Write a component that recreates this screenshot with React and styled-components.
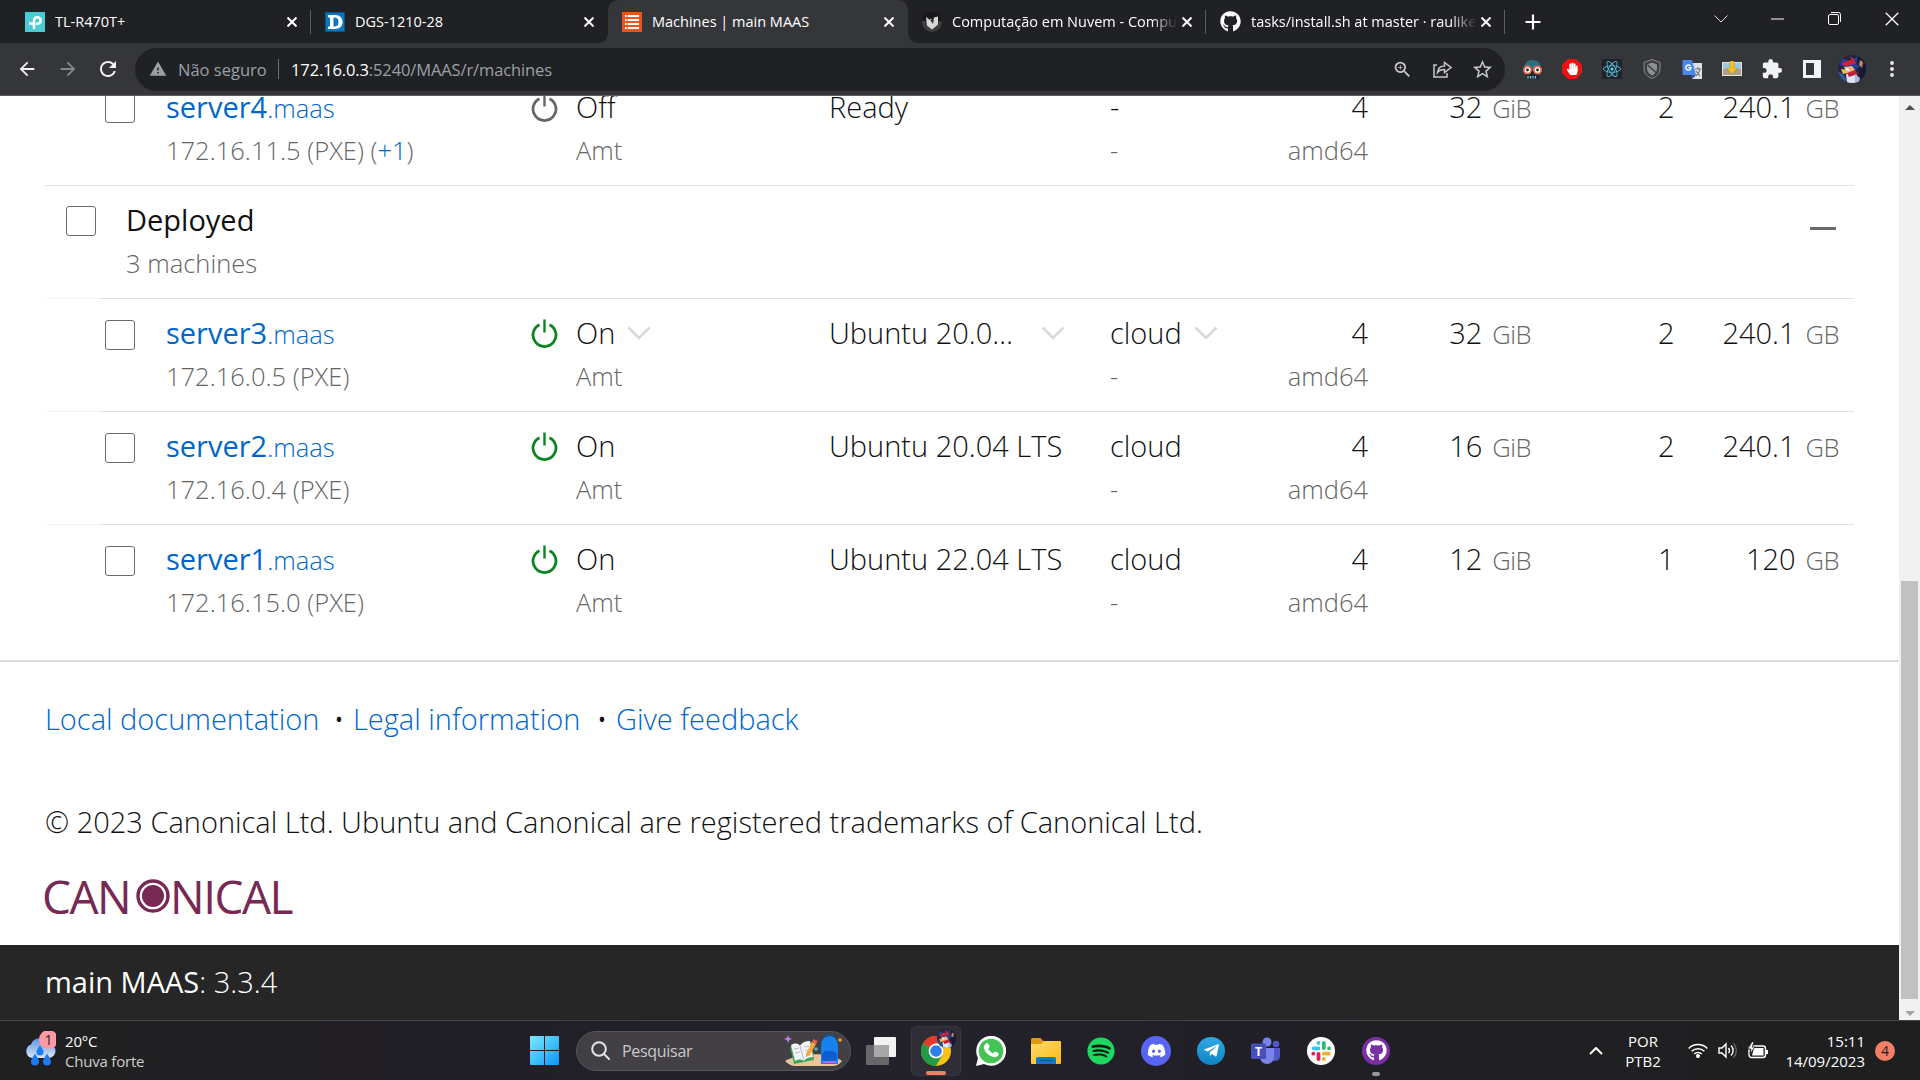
import React from "react";
import styled, { createGlobalStyle } from "styled-components";
import { FaGithub, FaSpotify, FaDiscord, FaTelegramPlane, FaWhatsapp, FaReact, FaHandPaper } from "react-icons/fa";
import { MdArrowBack, MdArrowForward, MdRefresh, MdWarning, MdZoomIn, MdStarBorder, MdExtension } from "react-icons/md";

const Global = createGlobalStyle`
  * { box-sizing: border-box; }
  body { margin: 0; background: #fff; overflow: hidden; }
`;

const Screen = styled.div`
  width: 1920px;
  height: 1080px;
  display: flex;
  flex-direction: column;
  overflow: hidden;
  font-family: "Open Sans", "Noto Sans", sans-serif;
`;

/* ---------- browser ---------- */
const TabStrip = styled.div`
  height: 43px;
  flex: none;
  display: flex;
  background: #202124;
  padding-left: 11px;
`;
const Tab = styled.div`
  position: relative;
  width: ${(p) => p.$w}px;
  height: 43px;
  display: flex;
  align-items: center;
  padding: 0 14px;
  gap: 10px;
  color: #fff;
  background: ${(p) => (p.$active ? "#35363a" : "transparent")};
  border-radius: 10px 10px 0 0;
  &::after {
    content: "";
    display: ${(p) => (p.$sep ? "block" : "none")};
    position: absolute;
    right: 0;
    top: 10px;
    width: 1px;
    height: 24px;
    background: #5b5d61;
  }
`;
const Corner = styled.i`
  position: absolute;
  bottom: 0;
  width: 9px;
  height: 9px;
  ${(p) => (p.$left ? "left: -9px;" : "right: -9px;")}
  background: radial-gradient(circle at ${(p) => (p.$left ? "0 0" : "100% 0")}, transparent 8.5px, #35363a 9px);
`;
const TabTitle = styled.span`
  flex: 1;
  min-width: 0;
  overflow: hidden;
  white-space: nowrap;
  font-size: 14.5px;
  line-height: 20px;
  letter-spacing: ${(p) => p.$ls || 0}px;
  margin-right: -6px;
  mask-image: ${(p) => (p.$fade ? "linear-gradient(90deg, #000 88%, transparent 100%)" : "none")};
`;
const WindowButtons = styled.div`
  margin-left: auto;
  display: flex;
  align-items: center;
  height: 37px;
  padding-right: 0;
`;
const WinBtn = styled.div`
  width: 57px;
  display: flex;
  justify-content: center;
`;
const NewTab = styled.div`
  width: 55px;
  display: flex;
  align-items: center;
  justify-content: center;
`;
const Toolbar = styled.div`
  height: 53px;
  flex: none;
  display: flex;
  align-items: center;
  background: #35363a;
  border-bottom: 1px solid #5c5b60;
  padding: 0 8px 0 7px;
`;
const NavBtn = styled.div`
  width: 40.5px;
  display: flex;
  justify-content: center;
  color: ${(p) => (p.$dim ? "#86888b" : "#f1f1f1")};
`;
const Omnibox = styled.div`
  width: 1370px;
  height: 43px;
  margin-left: 6.5px;
  margin-right: 7px;
  border-radius: 22px;
  background: #202124;
  display: flex;
  align-items: center;
  padding: 0 12px 0 14px;
  font-size: 16.5px;
  color: #9aa0a6;
`;
const Insecure = styled.span`
  margin-left: 11px;
  width: 100px;
  letter-spacing: ${(p) => p.$ls || 0}px;
`;
const Bar = styled.i`
  width: 1px;
  height: 20px;
  background: #6d7074;
  margin-right: 12px;
`;
const Url = styled.span`
  flex: 1;
  letter-spacing: -0.12px;
  b { font-weight: 400; color: #fff; }
`;
const OmniIcon = styled.div`
  width: 40px;
  margin-right: ${(p) => (p.$last ? -9 : 0)}px;
  display: flex;
  justify-content: center;
  color: #c6c8ca;
`;
const Ext = styled.div`
  width: 40px;
  display: flex;
  justify-content: center;
`;

/* ---------- page ---------- */
const Viewport = styled.div`
  height: 924px;
  flex: none;
  display: flex;
  overflow: hidden;
`;
const Page = styled.div`
  width: 1899px;
  display: flex;
  flex-direction: column;
  background: #fff;
  color: #111;
  font-weight: 300;
  font-size: 29px;
`;
const Table = styled.div`
  margin: -24px 45px 23px;
  width: 1809px;
`;
const grid = "121px 365px 298px 281px 140px 118px 163px 143.5px 164.5px";
const Row = styled.div`
  display: grid;
  grid-template-columns: ${grid};
  height: 113px;
  padding-top: 14px;
  background:
    linear-gradient(${(p) => (p.$nested ? "#f5f5f5" : "#e1e1e1")}, ${(p) => (p.$nested ? "#f5f5f5" : "#e1e1e1")}) 0 0 / 54px 1px no-repeat,
    linear-gradient(#e1e1e1, #e1e1e1) 54px 0 / 1755px 1px no-repeat;
`;
const GroupRow = styled(Row)`
  grid-template-columns: 81px 1fr auto;
`;
const Cell = styled.div`
  display: flex;
  flex-direction: column;
  align-items: ${(p) => (p.$right ? "flex-end" : "flex-start")};
  padding-left: ${(p) => p.$pad || 0}px;
  white-space: nowrap;
`;
const Primary = styled.div`
  height: 42px;
  line-height: 42px;
  display: flex;
  align-items: baseline;
  font-weight: ${(p) => (p.$strong ? 400 : 300)};
  letter-spacing: ${(p) => p.$ls || 0}px;
  color: ${(p) => (p.$link ? "#06c" : "#111")};
`;
const Secondary = styled.div`
  height: 42px;
  line-height: 42px;
  margin-top: 1px;
  font-size: 25.5px;
  letter-spacing: ${(p) => p.$ls || 0}px;
  color: #666;
`;
const Domain = styled.span`
  font-size: 25.5px;
  font-weight: 300;
`;
const Unit = styled.span`
  font-size: 25.5px;
  color: #666;
  margin-left: 10px;
  letter-spacing: -0.5px;
`;
const More = styled.span`
  color: #06c;
`;
const Checkbox = styled.div`
  width: 30px;
  height: 30px;
  border: 1.5px solid #6b6b6b;
  border-radius: 3px;
  margin-top: ${(p) => p.$top}px;
  margin-left: ${(p) => p.$left}px;
`;
const PowerCell = styled.div`
  display: flex;
  gap: 18px;
`;
const Caret = styled.svg`
  align-self: center;
  margin-left: ${(p) => p.$gap}px;
  margin-top: -1px;
`;
const Collapse = styled.div`
  width: 26px;
  height: 3px;
  background: #6a6a6a;
  margin: 28px 18px 0 0;
`;
const Footer = styled.footer`
  flex: 1;
  display: flex;
  flex-direction: column;
  border-top: 2px solid #d9d9d9;
  padding: 35px 45px 0;
`;
const Links = styled.div`
  display: flex;
  height: 44px;
  line-height: 44px;
  white-space: pre;
`;
const Link = styled.span`
  color: #06c;
  width: ${(p) => p.$w}px;
  letter-spacing: ${(p) => p.$ls || 0}px;
`;
const Dot = styled.span`
  width: 28px;
  text-align: center;
`;
const Legal = styled.div`
  margin-top: 59px;
  height: 44px;
  line-height: 44px;
  white-space: nowrap;
  letter-spacing: ${(p) => p.$ls || 0}px;
`;
const Logo = styled.div`
  display: flex;
  align-items: center;
  height: 46px;
  margin-top: 29px;
  margin-left: -3px;
  font-size: 46px;
  line-height: 46px;
  font-weight: 400;
  color: #772953;
`;
const LogoPart = styled.span`
  width: ${(p) => p.$w}px;
  letter-spacing: ${(p) => p.$ls}px;
  white-space: nowrap;
`;
const Status = styled.div`
  height: 75px;
  flex: none;
  background: #262626;
  color: #fff;
  padding: 16px 45px 0;
  line-height: 42px;
  b { font-weight: 400; }
`;
const Scrollbar = styled.div`
  width: 21px;
  background: #f1f1f1;
  display: flex;
  flex-direction: column;
  align-items: center;
  justify-content: space-between;
`;
const Thumb = styled.div`
  width: 17px;
  height: 418px;
  background: #c1c1c1;
`;
const ScrollUp = styled.div`
  height: 485px;
  padding-top: 4px;
`;
const ScrollDown = styled.div`
  height: 21px;
  padding-top: 2px;
`;

/* ---------- taskbar ---------- */
const Taskbar = styled.div`
  height: 60px;
  flex: none;
  display: flex;
  align-items: center;
  background: linear-gradient(90deg, #202020, #221f27 25%, #23212b 50%, #201f24 72%, #1f1f1f);
  border-top: 1px solid #444446;
  color: #fff;
  font-size: 15px;
`;
const Weather = styled.div`
  width: 517px;
  padding-left: 24px;
  display: flex;
  gap: 9px;
`;
const Lines = styled.div`
  display: flex;
  flex-direction: column;
  text-align: ${(p) => p.$align || "left"};
  line-height: 20px;
  letter-spacing: ${(p) => p.$ls || 0}px;
  white-space: nowrap;
  width: ${(p) => (p.$w ? p.$w + "px" : "auto")};
  margin-right: ${(p) => p.$mr || 0}px;
`;
const Dim = styled.span`
  color: #cfcfcf;
`;
const Start = styled.div`
  width: 59px;
  padding-left: 13px;
  display: flex;
`;
const Search = styled.div`
  width: 275px;
  height: 40px;
  border-radius: 20px;
  background: #423f45;
  border: 1px solid #58565b;
  display: flex;
  align-items: center;
  padding: 0 6px 0 14px;
  color: #c9c8ca;
  font-size: 16px;
  margin-right: 2.5px;
`;
const SearchLabel = styled.span`
  flex: 1;
  padding-left: 12px;
  letter-spacing: -0.3px;
`;
const App55 = styled.div`
  position: relative;
  width: 55px;
  height: 50px;
  display: flex;
  align-items: center;
  justify-content: center;
`;
const Running = styled(App55)`
  width: 50px;
  margin: 0 2.5px;
  border-radius: 5px;
  background: #2f2d36;
  border: 1px solid #37353d;
`;
const Indicator = styled.i`
  position: absolute;
  bottom: 0;
  width: ${(p) => p.$w}px;
  height: 4px;
  border-radius: 2px;
  background: ${(p) => p.$c};
`;
const Disc = styled.div`
  width: ${(p) => p.$s}px;
  height: ${(p) => p.$s}px;
  border-radius: 50%;
  background: ${(p) => p.$bg};
  color: ${(p) => p.$fg || "#fff"};
  display: flex;
  align-items: center;
  justify-content: center;
`;
const Mini = styled.div`
  position: absolute;
  right: 4px;
  top: 2px;
  display: flex;
`;
const Tray = styled.div`
  margin-left: auto;
  display: flex;
  align-items: center;
  padding-right: 25px;
`;
const TrayIcon = styled.div`
  width: 30px;
  display: flex;
  justify-content: center;
`;
const Badge = styled(Disc)`
  font-size: 14px;
  color: #1c1c1c;
  margin-left: 10px;
`;

const Cross = ({ s = 10, w = 2, c = "#fff" }) => (
  <svg width={s} height={s} viewBox="0 0 10 10" stroke={c} strokeWidth={w} fill="none">
    <path d="M.5.5l9 9M9.5.5l-9 9" />
  </svg>
);

const Avatar = ({ s }) => (
  <svg width={s} height={s} viewBox="0 0 28 28">
    <defs>
      <clipPath id={"av" + s}><circle cx="14" cy="14" r="14" /></clipPath>
    </defs>
    <g clipPath={`url(#av${s})`}>
      <rect width="28" height="28" fill="#22243f" />
      <path d="M20 0h8v28h-6z" fill="#171a30" />
      <path d="M22 5l3 2-1 6-3-3z" fill="#c9885b" />
      <path d="M3 3l9 3 8-5-2 8 5 2-6 4-10-2-5-3z" fill="#263d91" />
      <path d="M4 8l8-3 7 3-7 2-6 1z" fill="#cf2138" />
      <path d="M12 1l5 4-2 4z" fill="#d4293b" />
      <path d="M6 12l8-1 3 4-3 4-6-1z" fill="#f0b184" />
      <path d="M8 13l3 1v2l-3-1z" fill="#fff" />
      <path d="M3 14l5 1 1 3-4 1z" fill="#f5c543" />
      <path d="M8 19l9-3 5 12H9z" fill="#dfe6f3" />
      <path d="M9 18l8-3 3 4-9 3z" fill="#c91f34" />
      <path d="M17 19l5 4-1 5h-4z" fill="#a7b5d8" />
      <path d="M0 16l6 4 4 8H0z" fill="#315b91" />
    </g>
  </svg>
);

const MaasIcon = () => (
  <svg width="20" height="20" viewBox="0 0 20 20">
    <path d="M0 0h20v20H0z" fill="#e95420" />
    {[3, 7, 11, 15].map((y) => (
      <path key={y} d={`M3 ${y}h1.6v2H3zM5.6 ${y}h11.4v2H5.6z`} fill="#fff" />
    ))}
  </svg>
);
const TpIcon = () => (
  <svg width="20" height="20" viewBox="0 0 20 20">
    <path d="M0 0h20v20H0z" fill="#4acbd6" />
    <path d="M4 11.5h5M9 17v-8.500a3.300 3.300 0 1 1 3.300 3.300H11" stroke="#fff" strokeWidth="2.600" fill="none" />
  </svg>
);
const DlinkIcon = () => (
  <svg width="20" height="20" viewBox="0 0 20 20">
    <path d="M0 0h20v20H0z" fill="#0b5288" />
    <path d="M1 1h18v18H1z" fill="#0a76bd" />
    <path d="M3 3h7c5 0 7.500 3 7.500 7s-2.500 7-7.500 7H3v-2l2-1V6L3 5zM8.500 5.500v9c4 0 5-1.500 5-4.500s-1-4.500-5-4.500z" fill="#fff" fillRule="evenodd" />
  </svg>
);
const NuvemIcon = () => (
  <svg width="20" height="20" viewBox="0 0 20 20">
    <circle cx="10" cy="10" r="10" fill="#3e3e3e" />
    <path d="M0 9a10 10 0 0 1 20 0z" fill="#181818" />
    <path d="M4 5l4 3v-1.500l3 2 1-3 4-1v8l-6 5-5-4z" fill="#d9d9d9" />
    <path d="M8 8l3 4 1-5z" fill="#3e3e3e" />
  </svg>
);

const Power = ({ on }) => (
  <svg width="27" height="30" viewBox="0 0 27 30" fill="none" stroke={on ? "#0e8420" : "#666"} strokeWidth="2.800">
    <path d="M8.500 6.200A11.500 11.500 0 1 0 18.500 6.200" />
    <path d="M13.500 1v13" strokeWidth="2.400" />
  </svg>
);
const Chevron = ({ gap }) => (
  <Caret $gap={gap} width="24" height="14" viewBox="0 0 24 14" fill="none" stroke="#d9d9d9" strokeWidth="2.600">
    <path d="M1.500 1.500L12 12 22.500 1.500" />
  </Caret>
);

function Machine({ m }) {
  return (
    <Row $nested={m.nested}>
      <Checkbox $left={60} $top={m.nested ? 8 : 7} />
      <Cell>
        <Primary $strong $link $ls={0}>{m.name}<Domain>.maas</Domain></Primary>
        <Secondary>{m.ip} (PXE){m.more && <> (<More>{m.more}</More>)</>}</Secondary>
      </Cell>
      <PowerCell>
        <svg width="27" height="37" viewBox="0 -6.500 27 37" overflow="visible"><Power on={m.on} /></svg>
        <Cell>
          <Primary>{m.on ? "On" : "Off"}{m.open && <Chevron gap={12} />}</Primary>
          <Secondary>Amt</Secondary>
        </Cell>
      </PowerCell>
      <Cell>
        <Primary>{m.status}{m.open && <Chevron gap={28} />}</Primary>
      </Cell>
      <Cell>
        <Primary>{m.pool}{m.open && <Chevron gap={12} />}</Primary>
        <Secondary>-</Secondary>
      </Cell>
      <Cell $right>
        <Primary>4</Primary>
        <Secondary>amd64</Secondary>
      </Cell>
      <Cell $right><Primary>{m.ram}<Unit>GiB</Unit></Primary></Cell>
      <Cell $right><Primary>{m.disks}</Primary></Cell>
      <Cell $right><Primary>{m.storage}<Unit>GB</Unit></Primary></Cell>
    </Row>
  );
}

const ready = { name: "server4", ip: "172.16.11.5", more: "+1", on: false, status: "Ready", pool: "-", ram: 32, disks: 2, storage: "240.1" };
const deployed = [
  { name: "server3", ip: "172.16.0.5", on: true, open: true, status: "Ubuntu 20.0…", pool: "cloud", ram: 32, disks: 2, storage: "240.1", nested: true },
  { name: "server2", ip: "172.16.0.4", on: true, status: "Ubuntu 20.04 LTS", pool: "cloud", ram: 16, disks: 2, storage: "240.1", nested: true },
  { name: "server1", ip: "172.16.15.0", on: true, status: "Ubuntu 22.04 LTS", pool: "cloud", ram: 12, disks: 1, storage: "120", nested: true },
];

const tabs = [
  { icon: <TpIcon />, title: "TL-R470T+", w: 300, sep: true },
  { icon: <DlinkIcon />, title: "DGS-1210-28", w: 297 },
  { icon: <MaasIcon />, title: "Machines | main MAAS", w: 300, active: true },
  { icon: <NuvemIcon />, title: "Computação em Nuvem - Computação", w: 298, sep: true, fade: true },
  { icon: <FaGithub size={21} />, title: "tasks/install.sh at master · raulikeda", w: 299, sep: true, fade: true },
];

function Browser() {
  return (
    <>
      <TabStrip>
        {tabs.map((t) => (
          <Tab key={t.title} $w={t.w} $active={t.active} $sep={t.sep}>
            {t.active && <><Corner $left /><Corner /></>}
            {t.icon}
            <TabTitle $fade={t.fade}>{t.title}</TabTitle>
            <Cross />
          </Tab>
        ))}
        <NewTab>
          <svg width="16" height="16" viewBox="0 0 16 16" stroke="#fff" strokeWidth="2.200"><path d="M8 0.500v15M.5 8h15" /></svg>
        </NewTab>
        <WindowButtons>
          <WinBtn><svg width="14" height="8" viewBox="0 0 14 8" fill="none" stroke="#ddd"><path d="M.5.5L7 7 13.500.5" /></svg></WinBtn>
          <WinBtn><svg width="13" height="2"><path d="M0 1h13" stroke="#fff" /></svg></WinBtn>
          <WinBtn>
            <svg width="13" height="13" viewBox="0 0 13 13" fill="none" stroke="#fff">
              <rect x=".5" y="2.500" width="10" height="10" rx="1.500" />
              <path d="M3 .5h7.500a2 2 0 0 1 2 2V10" />
            </svg>
          </WinBtn>
          <WinBtn><Cross s={14} w={0.9} /></WinBtn>
        </WindowButtons>
      </TabStrip>
      <Toolbar>
        <NavBtn><MdArrowBack size={22} /></NavBtn>
        <NavBtn $dim><MdArrowForward size={22} /></NavBtn>
        <NavBtn><MdRefresh size={24} /></NavBtn>
        <Omnibox>
          <MdWarning size={18} />
          <Insecure>Não seguro</Insecure>
          <Bar />
          <Url><b>172.16.0.3</b>:5240/MAAS/r/machines</Url>
          <OmniIcon><MdZoomIn size={21} /></OmniIcon>
          <OmniIcon>
            <svg width="19" height="18" viewBox="0 0 19 18" fill="none" stroke="#c6c8ca" strokeWidth="1.500">
              <path d="M4 5H1v12h13v-4M4.500 12.500c.5-4.500 3-6.500 7-6.500V2.500L18 7.500l-6.500 5V9.500c-3.500 0-5.500 1-7 3z" />
            </svg>
          </OmniIcon>
          <OmniIcon $last><MdStarBorder size={23} /></OmniIcon>
        </Omnibox>
        <Ext>
          <svg width="21" height="21" viewBox="0 0 21 21">
            <path d="M2 11C2 4 5 1 10.500 1S19 4 19 11z" fill="#2c6f80" />
            <path d="M4 12h13v6a2 2 0 0 1-2 2H6a2 2 0 0 1-2-2z" fill="#15262c" />
            <path d="M6 17v2.500M8.500 17v2.500M11 17v2.500M13.500 17v2.500" stroke="#8fd0e4" strokeWidth="1.200" />
            <circle cx="5.500" cy="11" r="3.600" fill="#fff" stroke="#ef6f53" strokeWidth="1.700" />
            <circle cx="15.500" cy="11" r="3.600" fill="#fff" stroke="#ef6f53" strokeWidth="1.700" />
            <circle cx="5.500" cy="11" r="1.400" fill="#222" /><circle cx="15.500" cy="11" r="1.400" fill="#222" />
          </svg>
        </Ext>
        <Ext>
          <svg width="20" height="20" viewBox="0 0 20 20">
            <path d="M6 0h8l6 6v8l-6 6H6l-6-6V6z" fill="#ee1111" />
            <FaHandPaper x="4" y="3.500" size={12.500} color="#fff" />
          </svg>
        </Ext>
        <Ext>
          <svg width="20" height="20" viewBox="0 0 20 20">
            <rect width="20" height="20" rx="1" fill="#20232a" />
            <FaReact x="1" y="1" size={18} color="#5ecbe8" />
          </svg>
        </Ext>
        <Ext>
          <svg width="18" height="20" viewBox="0 0 18 20">
            <path d="M9 .5l8 3v6c0 5-3 8-8 10-5-2-8-5-8-10v-6z" fill="#3c3d40" stroke="#8c8e90" />
            <path d="M9 3.500l5 2V9.500c0 3.500-2 5.500-5 7-3-1.500-5-3.500-5-7v-4z" fill="#8d8f91" />
            <path d="M4.500 6l9 8" stroke="#3c3d40" strokeWidth="1.500" />
          </svg>
        </Ext>
        <Ext>
          <svg width="21" height="21" viewBox="0 0 21 21">
            <path d="M9 4h11v16H10z" fill="#dfe1e3" />
            <path d="M13 10h6M16 8v2M14 17c2-2 3.500-4 4-7M14 12l4 5" stroke="#6d7a85" strokeWidth="1.200" fill="none" />
            <path d="M1.500 1H10l4 15H1.500A1 1 0 0 1 .5 15V2a1 1 0 0 1 1-1z" fill="#4a87ee" />
            <path d="M14 16l-3.500 4-1-4z" fill="#2c55b8" />
            <path d="M8.500 7A2.600 2.600 0 1 0 9 8.800H6.500" stroke="#fff" strokeWidth="1.400" fill="none" />
          </svg>
        </Ext>
        <Ext>
          <svg width="20" height="16" viewBox="0 0 20 16">
            <path d="M0 1h20v14H0z" fill="#e8e4d8" />
            <path d="M1 2h18v6H1z" fill="#9cc7e6" /><path d="M1 8h18v6H1z" fill="#a89f90" />
            <path d="M8 0h4v7h3.500L10 13 4.500 7H8z" fill="#f6c423" stroke="#b98612" strokeWidth=".5" />
          </svg>
        </Ext>
        <Ext><MdExtension size={22} color="#f1f3f4" /></Ext>
        <Ext>
          <svg width="18" height="18" viewBox="0 0 18 18"><path d="M0 0h18v18H0zM3 3v12h8V3z" fill="#f1f3f4" fillRule="evenodd" /></svg>
        </Ext>
        <Ext><Avatar s={28} /></Ext>
        <Ext>
          <svg width="4" height="18" fill="#e8eaed"><circle cx="2" cy="3" r="1.900" /><circle cx="2" cy="9" r="1.900" /><circle cx="2" cy="15" r="1.900" /></svg>
        </Ext>
      </Toolbar>
    </>
  );
}

function Desktop() {
  return (
    <Taskbar>
      <Weather>
        <svg width="32" height="40" viewBox="0 0 32 40">
          <defs>
            <linearGradient id="cl" x1="0" y1="0" x2="0" y2="1"><stop offset="0" stopColor="#5c93e0" /><stop offset="1" stopColor="#dbe6fa" /></linearGradient>
          </defs>
          <path d="M8 27a7 7 0 0 1-1-13.500A9 9 0 0 1 24 13a7 7 0 0 1 1 14z" fill="url(#cl)" />
          <path d="M16 15c3 4 3.500 5 3.500 6.500a3.500 3.500 0 0 1-7 0C12.500 20 13 19 16 15zM11 23c3 5 4 6 4 8a4 4 0 0 1-8 0c0-2 1-3 4-8zM23 23c3 5 4 6 4 8a4 4 0 0 1-8 0c0-2 1-3 4-8z" transform="translate(0 -.5)" fill="#1b7cf2" />
          <circle cx="24.500" cy="8.500" r="9.500" fill="#ff99a4" />
          <text x="24.500" y="13.500" textAnchor="middle" fontSize="14" fill="#222">1</text>
        </svg>
        <Lines $ls={-0.2}><span>20°C</span><Dim>Chuva forte</Dim></Lines>
      </Weather>
      <Start>
        <svg width="29" height="29" viewBox="0 0 29 29">
          <defs><linearGradient id="win" x1="0" y1="0" x2="1" y2="1"><stop offset="0" stopColor="#7deaff" /><stop offset="1" stopColor="#0a96fb" /></linearGradient></defs>
          <path d="M1 0h13v14H0V1a1 1 0 0 1 1-1zM15 0h13a1 1 0 0 1 1 1v13H15zM0 15h14v14H1a1 1 0 0 1-1-1zM15 15h14v13a1 1 0 0 1-1 1H15z" fill="url(#win)" />
        </svg>
      </Start>
      <Search>
        <svg width="19" height="19" viewBox="0 0 19 19" fill="none" stroke="#e4e4e4" strokeWidth="2"><circle cx="8" cy="8" r="6.800" /><path d="M13 13l5 5" strokeLinecap="round" /></svg>
        <SearchLabel>Pesquisar</SearchLabel>
        <svg width="60" height="34" viewBox="0 0 60 34">
          <path d="M1 27C14 19 46 17 58 27c-3 4-6 5-10 5H12C8 32 5 31 1 27z" fill="#eac69a" />
          <path d="M6 13l22-5 2 18-20 4z" fill="#3fa55e" />
          <path d="M7 11c4-2 7-2 9 1 2-4 6-5 10-5l3 16c-4 0-7 1-9 4-2-2-6-2-9 0z" fill="#f4f4f8" />
          <path d="M16 12l4 14M10 15l5-1M11 19l5-1M20 13l5-1M21 17l5-1" stroke="#b9bac9" fill="none" />
          <path d="M22 20l6-12 4 2-6 11-4 2z" fill="#f7a43c" /><path d="M28 8l1.500-3 4 2-1.500 3z" fill="#e8604c" />
          <path d="M3 1l1.200 2.800L7 5 4.200 6 3 9 2 6-1 5l3-1.200z" fill="#c77df0" transform="translate(1 0)" />
          <path d="M37 30V13c0-7 3-11 8.500-11S54 6 54 13v17z" fill="#1781ec" />
          <path d="M42 3c0-4 7-4 7 0" stroke="#0b58b3" fill="none" strokeWidth="1.500" />
          <rect x="38" y="17" width="15" height="12" rx="5" fill="#0b5dd0" /><path d="M39 27h13v2H39z" fill="#b06df0" />
          <circle cx="56" cy="6" r="1.800" fill="#f5a31b" /><circle cx="32" cy="15" r="1.700" fill="#3fc0d8" />
        </svg>
      </Search>
      <App55>
        <svg width="30" height="28" viewBox="0 0 30 28">
          <rect x="0" y="8" width="23" height="20" rx="1" fill="#68686a" />
          <rect x="8" y="0" width="22" height="20" rx="1" fill="#f3f3f3" />
          <path d="M8 8h15v12H8z" fill="#a8a8a8" />
        </svg>
      </App55>
      <Running>
        <svg width="30" height="30" viewBox="0 0 30 30">
          <circle cx="15" cy="15" r="15" fill="#fbc116" />
          <path d="M15 15L2 7.500A15 15 0 0 1 28 7.500H15z" fill="#e33b2e" />
          <path d="M2 7.500A15 15 0 0 0 15 30l6.500-11.300L15 15z" fill="#229a48" />
          <circle cx="15" cy="15" r="7.400" fill="#fff" /><circle cx="15" cy="15" r="5.800" fill="#2f7de9" />
        </svg>
        <Mini><Avatar s={19} /></Mini>
        <Indicator $w={20} $c="#f47f67" />
      </Running>
      <App55>
        <svg width="30" height="30" viewBox="0 0 30 30">
          <path d="M0 30l2-8A15 15 0 1 1 8 28z" fill="#fff" />
          <circle cx="15" cy="15" r="12.300" fill="#45c455" />
          <path d="M10 7.500c1-1 2-.5 2.500.6l1 2.200c.3.800-1 1.800-1.300 2.400 1 2.200 2.700 3.600 5 4.600.8-.4 1.500-2 2.300-1.700l2.500 1.200c1 .5.800 1.400.3 2.500-.8 1.700-3 2.300-5 1.700C12 19.500 9 16 8 12.500c-.5-2 .5-4 2-5z" fill="#fff" />
        </svg>
      </App55>
      <App55>
        <svg width="30" height="26" viewBox="0 0 30 26">
          <defs><linearGradient id="fo" x1="0" y1="0" x2="1" y2="1"><stop offset="0" stopColor="#ffdc6b" /><stop offset="1" stopColor="#fbb915" /></linearGradient></defs>
          <path d="M0 1.500A1.500 1.500 0 0 1 1.500 0h8l3 3H29v5H0z" fill="#dc9b0b" />
          <path d="M0 6h10l3-3h16a1 1 0 0 1 1 1v21a1 1 0 0 1-1 1H1a1 1 0 0 1-1-1z" fill="url(#fo)" />
          <path d="M5 26v-5a2 2 0 0 1 2-2h16a2 2 0 0 1 2 2v5z" fill="#1177cd" /><path d="M9 22.500h12" stroke="#0a4e8c" />
        </svg>
      </App55>
      <App55><Disc $s={24} $bg="#101a13" $fg="#1ed760"><FaSpotify size={28} style={{ flex: "none" }} /></Disc></App55>
      <App55><Disc $s={30} $bg="#5865f2"><FaDiscord size={19} /></Disc></App55>
      <App55><Disc $s={28} $bg="linear-gradient(#2fa9e3, #0f84c4)"><FaTelegramPlane size={17} /></Disc></App55>
      <App55>
        <svg width="30" height="28" viewBox="0 0 30 28">
          <circle cx="25" cy="7" r="3.300" fill="#5059c9" /><path d="M20 11h9v8a5 5 0 0 1-9 3z" fill="#5059c9" />
          <circle cx="16" cy="5" r="4.500" fill="#7b83eb" /><path d="M9 11h14v9a7 7 0 0 1-14 0z" fill="#7b83eb" />
          <rect x="0" y="6.500" width="15" height="15.500" rx="1.500" fill="#4650b8" />
          <text x="7.500" y="18.500" textAnchor="middle" fontSize="12" fontWeight="700" fill="#fff">T</text>
        </svg>
      </App55>
      <App55>
        <svg width="28" height="28" viewBox="0 0 28 28" strokeWidth="3.800" strokeLinecap="round">
          <circle cx="14" cy="14" r="14" fill="#fff" />
          <path d="M6.500 11.300h5M11.500 6h.01" stroke="#36c5f0" /><path d="M16.800 6v5M22 11.300h.01" stroke="#2eb67d" />
          <path d="M16.800 16.700h5M16.800 22h.01" stroke="#ecb22e" /><path d="M11.500 17v5M6.300 16.700h.01" stroke="#e01e5a" />
        </svg>
      </App55>
      <App55><Disc $s={28} $bg="#7b2fa5"><FaGithub size={21} /></Disc><Indicator $w={8} $c="#9a9a9c" /></App55>
      <Tray>
        <svg width="14" height="8" viewBox="0 0 14 8" fill="none" stroke="#fff" strokeWidth="2"><path d="M1 7l6-6 6 6" /></svg>
        <Lines $align="center" $w={80} $mr={0}><span>POR</span><span>PTB2</span></Lines>
        <TrayIcon>
          <svg width="20" height="15" viewBox="0 0 20 15" fill="none" stroke="#fff" strokeWidth="1.500">
            <path d="M.7 5.500a13 13 0 0 1 18.600 0M3.600 8.300a9 9 0 0 1 12.800 0M6.300 11a5.200 5.200 0 0 1 7.400 0" /><circle cx="10" cy="13" r="1.300" fill="#fff" />
          </svg>
        </TrayIcon>
        <TrayIcon>
          <svg width="20" height="17" viewBox="0 0 20 17" fill="none" stroke="#fff" strokeWidth="1.400">
            <path d="M1 6h3l4-4v13l-4-4H1z" /><path d="M10.500 6a4 4 0 0 1 0 5M13 3.500a7 7 0 0 1 0 10" /><path d="M15.500 1.500a10 10 0 0 1 0 14" stroke="#666" />
          </svg>
        </TrayIcon>
        <TrayIcon>
          <svg width="20" height="17" viewBox="0 0 20 17" fill="none" stroke="#fff" strokeWidth="1.400">
            <rect x="1" y="4" width="16.500" height="11.500" rx="2.500" /><path d="M6 6h9.500v7.500H4z" fill="#fff" stroke="none" /><path d="M19 8v4" strokeWidth="2" />
            <path d="M4-.5L0 7h3l-1 5 5-7H4l2-5z" fill="#fff" stroke="#1f1f1f" strokeWidth=".8" />
          </svg>
        </TrayIcon>
        <Lines $align="right" $w={92}><span>15:11</span><span>14/09/2023</span></Lines>
        <Badge $s={20} $bg="#f47f67">4</Badge>
      </Tray>
    </Taskbar>
  );
}

export default function App() {
  return (
    <Screen>
      <Global />
      <Browser />
      <Viewport>
        <Page>
          <Table>
            <Machine m={ready} />
            <GroupRow>
              <Checkbox $left={21} $top={7} />
              <Cell>
                <Primary $strong>Deployed</Primary>
                <Secondary>3 machines</Secondary>
              </Cell>
              <Collapse />
            </GroupRow>
            {deployed.map((m) => <Machine key={m.name} m={m} />)}
          </Table>
          <Footer>
            <Links>
              <Link $w={280}>Local documentation</Link><Dot>•</Dot>
              <Link $w={235}>Legal information</Link><Dot>•</Dot>
              <Link>Give feedback</Link>
            </Links>
            <Legal>© 2023 Canonical Ltd. Ubuntu and Canonical are registered trademarks of Canonical Ltd.</Legal>
            <Logo>
              <LogoPart $w={94} $ls={-1.5}>CAN</LogoPart>
              <svg width="34" height="34" viewBox="0 0 34 34" fill="none" stroke="#772953">
                <circle cx="17" cy="17" r="15" strokeWidth="3.400" /><circle cx="17" cy="17" r="11" fill="#772953" stroke="none" />
              </svg>
              <LogoPart $w={130} $ls={-1.5}>NICAL</LogoPart>
            </Logo>
          </Footer>
          <Status><b>main MAAS</b>: 3.3.4</Status>
        </Page>
        <Scrollbar>
          <ScrollUp><svg width="10" height="20" viewBox="0 0 10 20"><path d="M0 10l5-5 5 5z" fill="#505050" /></svg></ScrollUp>
          <Thumb />
          <ScrollDown><svg width="10" height="10" viewBox="0 0 10 10"><path d="M0 3l5 5 5-5z" fill="#a3a3a3" /></svg></ScrollDown>
        </Scrollbar>
      </Viewport>
      <Desktop />
    </Screen>
  );
}
